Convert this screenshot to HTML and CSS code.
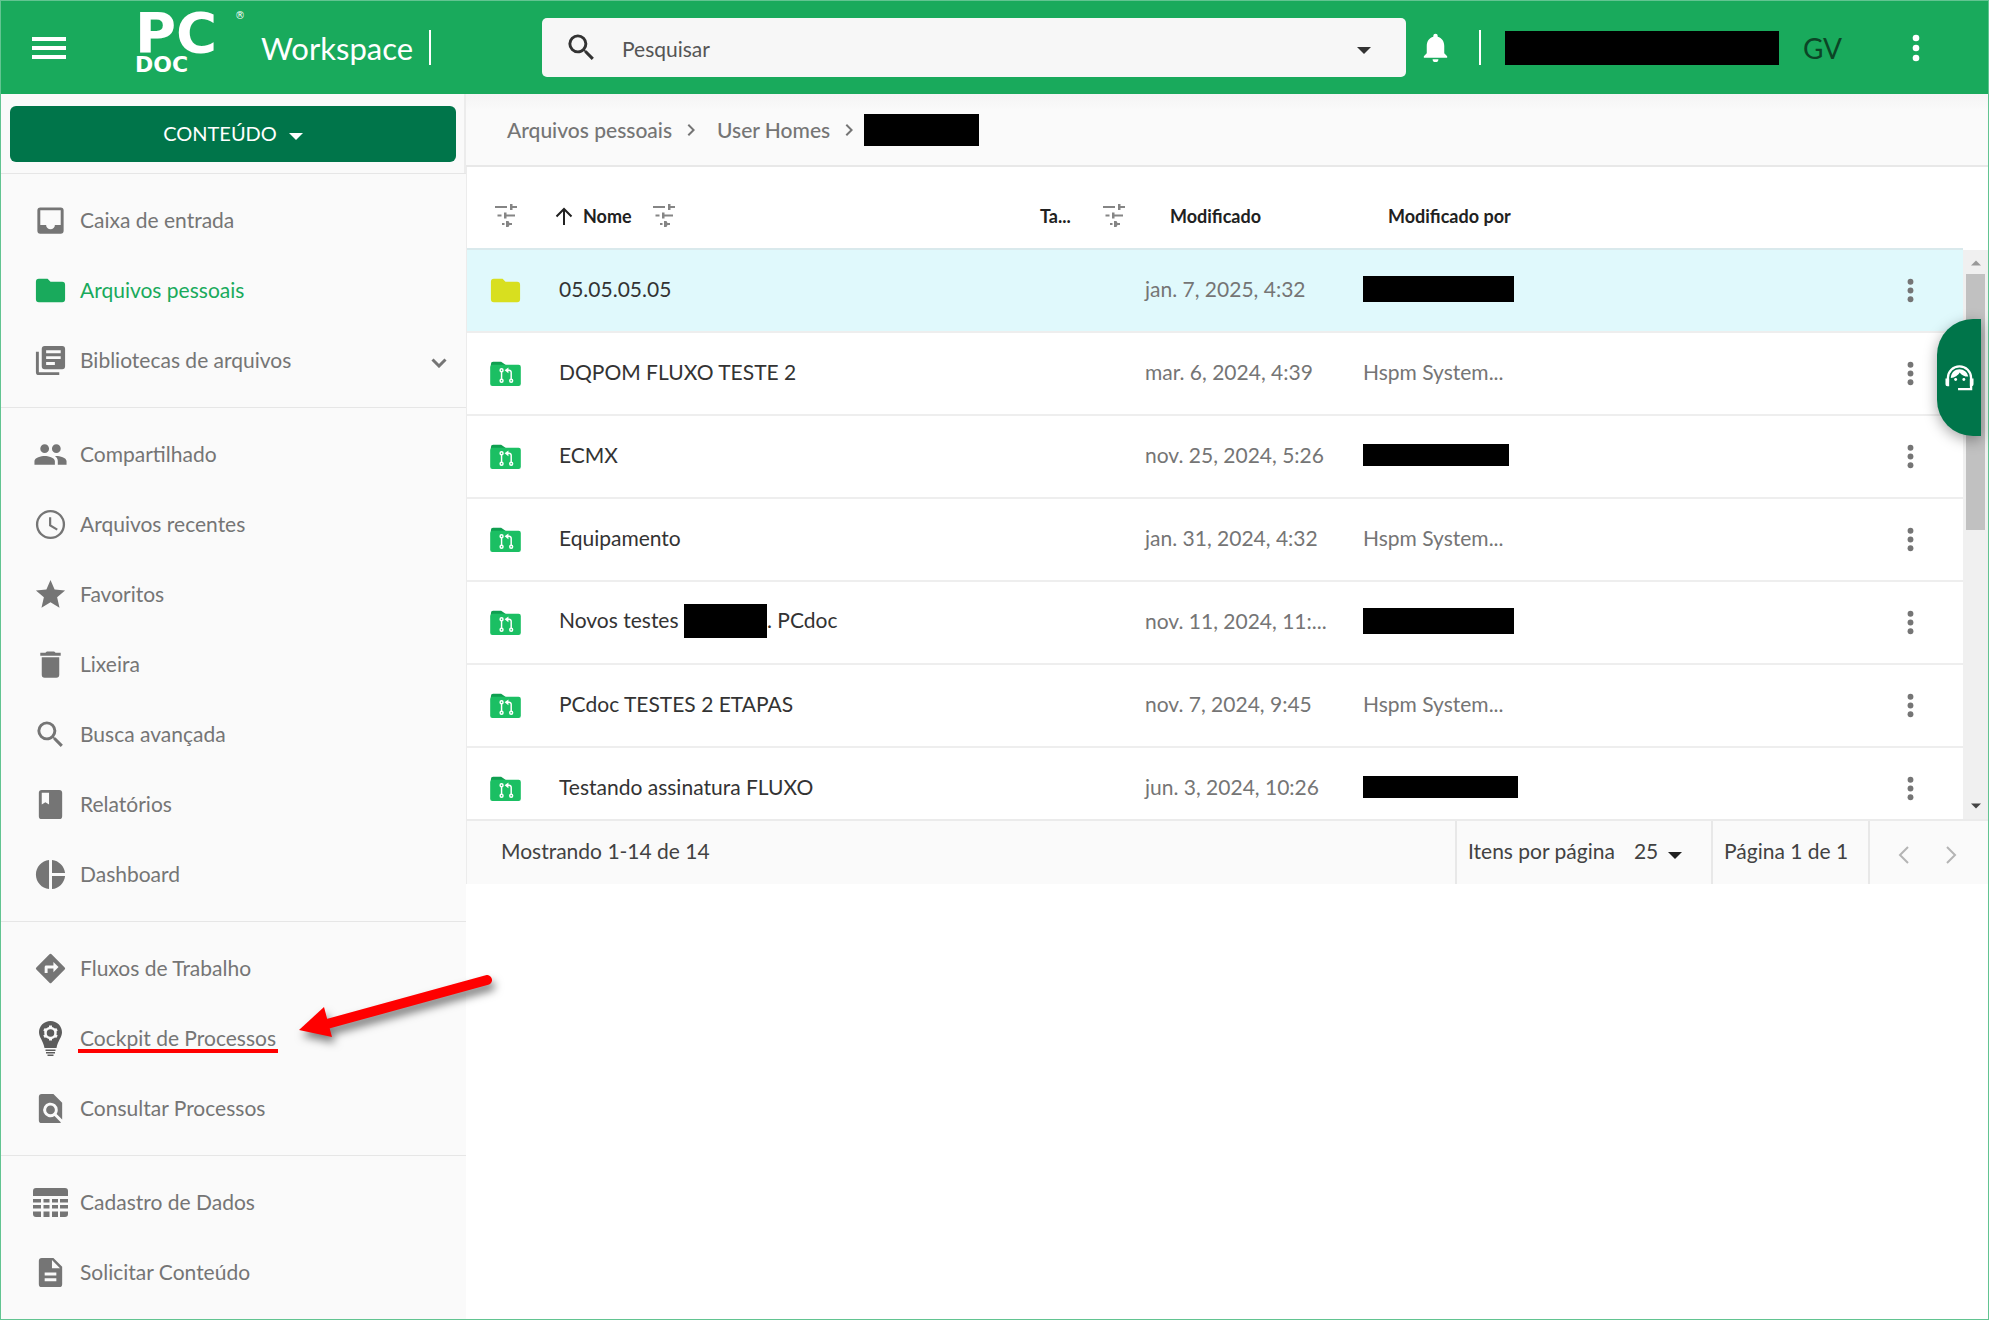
FILE: index.html
```html
<!DOCTYPE html>
<html lang="pt-BR">
<head>
<meta charset="utf-8">
<title>PCDOC Workspace</title>
<link rel="stylesheet" href="styles.css">
</head>
<body>
<svg class="defs" aria-hidden="true">
  <symbol id="caret" viewBox="0 0 14 7"><path d="M0 0h14L7 7z"/></symbol>
  <symbol id="dots" viewBox="0 0 24 24"><circle cx="12" cy="6" r="2"/><circle cx="12" cy="12" r="2"/><circle cx="12" cy="18" r="2"/></symbol>
  <symbol id="search" viewBox="0 0 24 24"><path d="M15.5 14h-.79l-.28-.27A6.47 6.47 0 0 0 16 9.5 6.5 6.5 0 1 0 9.5 16c1.61 0 3.09-.59 4.23-1.57l.27.28v.79l5 4.99L20.49 19zm-6 0a4.5 4.5 0 1 1 0-9 4.5 4.5 0 0 1 0 9z"/></symbol>
  <symbol id="folder" viewBox="0 0 24 24"><path d="M10 4H4a2 2 0 0 0-2 2v12a2 2 0 0 0 2 2h16a2 2 0 0 0 2-2V8a2 2 0 0 0-2-2h-8z"/></symbol>
  <symbol id="flow-folder" viewBox="0 0 24 24"><path fill="#0f9f50" d="M9 4H3.500A1.500 1.500 0 0 0 2 5.500V10h10V6z"/><rect x="1.500" y="6" width="21" height="14.500" rx="1.500" fill="#1bbf63"/><g fill="none" stroke="#fff" stroke-width="1"><path d="M9.300 10.800v5.200M13 9.800h1.500a1.400 1.400 0 0 1 1.400 1.400V16"/><circle cx="9.300" cy="9.800" r="1"/><circle cx="9.300" cy="17" r="1"/><circle cx="15.900" cy="17" r="1"/></g><path fill="#fff" d="M14 7.800v4l-2.600-2z"/></symbol>
  <symbol id="filter" viewBox="0 0 24 24"><path d="M0 2h12v2H0zM15 0h2.500v2H22v2h-4.500v2H15zM2.500 10.500h4v2h-4zM9 8.500h2.500v2H20v2h-8.500v2H9zM7 19h2.500v2H7zM11 17h2.500l1 2H17v2h-2.500l-1 2H11z"/></symbol>
  <symbol id="right" viewBox="0 0 24 24"><path d="M8.590 16.590 13.170 12 8.590 7.410 10 6l6 6-6 6z"/></symbol>
</svg>

<div class="app">
  <header class="topbar">
    <div class="brand">
      <button class="icon-btn" aria-label="Menu"><svg class="menu-icon" viewBox="0 0 34 22"><path d="M0 0h34v4H0zM0 9h34v4H0zM0 18h34v4H0z"/></svg></button>
      <a class="logo" href="#"><span class="logo-pc">PC</span><span class="logo-doc">DOC</span><span class="logo-mark">®</span></a>
      <span class="product">Workspace</span>
      <span class="bar"></span>
    </div>
    <div class="searchbox">
      <svg class="i35"><use href="#search"/></svg>
      <input type="text" aria-label="Pesquisar" placeholder="Pesquisar">
      <button class="icon-btn" aria-label="Opções de pesquisa"><svg class="caret"><use href="#caret"/></svg></button>
    </div>
    <div class="account">
      <button class="icon-btn" aria-label="Notificações"><svg class="i35" viewBox="0 0 24 24"><path d="M12 22a2 2 0 0 0 2-2h-4a2 2 0 0 0 2 2zm6-6v-5c0-3.070-1.640-5.640-4.500-6.320V4a1.500 1.500 0 0 0-3 0v.68C7.630 5.360 6 7.920 6 11v5l-2 2v1h16v-1z"/></svg></button>
      <span class="bar"></span>
      <span class="redact user-name"></span>
      <span class="initials">GV</span>
      <button class="icon-btn more" aria-label="Mais"><svg class="i40"><use href="#dots"/></svg></button>
    </div>
  </header>

  <div class="body">
    <nav class="sidebar">
      <div class="create"><button class="create-btn">CONTEÚDO <svg class="caret"><use href="#caret"/></svg></button></div>
      <div class="group">
        <a class="item" href="#"><svg class="i35" viewBox="0 0 24 24"><path d="M19 3H5a2 2 0 0 0-2 2v14a2 2 0 0 0 2 2h14a2 2 0 0 0 2-2V5a2 2 0 0 0-2-2zm0 12h-4a3 3 0 0 1-6 0H5V5h14z"/></svg><span>Caixa de entrada</span></a>
        <a class="item active" href="#"><svg class="i35"><use href="#folder"/></svg><span>Arquivos pessoais</span></a>
        <a class="item" href="#"><svg class="i35" viewBox="0 0 24 24"><path d="M4 6H2v14a2 2 0 0 0 2 2h14v-2H4zm16-4H8a2 2 0 0 0-2 2v12a2 2 0 0 0 2 2h12a2 2 0 0 0 2-2V4a2 2 0 0 0-2-2zm-1 9H9V9h10zm-4 4H9v-2h6zm4-8H9V5h10z"/></svg><span>Bibliotecas de arquivos</span><svg class="expand" viewBox="0 0 16 10"><path d="M1.500 1.500 8 8l6.500-6.500"/></svg></a>
      </div>
      <div class="group">
        <a class="item" href="#"><svg class="i35" viewBox="0 0 24 24"><path d="M16 11a3 3 0 1 0 0-6 3 3 0 0 0 0 6zm-8 0a3 3 0 1 0 0-6 3 3 0 0 0 0 6zm0 2c-2.330 0-7 1.170-7 3.500V19h14v-2.500C15 14.170 10.330 13 8 13zm8 0-.97.050c1.160.84 1.970 1.970 1.970 3.450V19h6v-2.500c0-2.330-4.670-3.500-7-3.500z"/></svg><span>Compartilhado</span></a>
        <a class="item" href="#"><svg class="i35" viewBox="0 0 24 24"><path d="M12 2a10 10 0 1 0 0 20 10 10 0 0 0 0-20zm0 18.400a8.400 8.400 0 1 1 0-16.800 8.400 8.400 0 0 1 0 16.800zM12.500 7H11v6l5.250 3.150.75-1.230-4.500-2.670z"/></svg><span>Arquivos recentes</span></a>
        <a class="item" href="#"><svg class="i35" viewBox="0 0 24 24"><path d="M12 17.270 18.180 21l-1.640-7.030L22 9.240l-7.190-.61L12 2 9.190 8.630 2 9.240l5.460 4.730L5.820 21z"/></svg><span>Favoritos</span></a>
        <a class="item" href="#"><svg class="i35" viewBox="0 0 24 24"><path d="M6 19a2 2 0 0 0 2 2h8a2 2 0 0 0 2-2V7H6zM19 4h-3.500l-1-1h-5l-1 1H5v2h14z"/></svg><span>Lixeira</span></a>
        <a class="item" href="#"><svg class="i35"><use href="#search"/></svg><span>Busca avançada</span></a>
        <a class="item" href="#"><svg class="i35" viewBox="0 0 24 24"><path fill-rule="evenodd" d="M18 2H6a2 2 0 0 0-2 2v16a2 2 0 0 0 2 2h12a2 2 0 0 0 2-2V4a2 2 0 0 0-2-2zM6 4h5v8l-2.500-1.500L6 12z"/></svg><span>Relatórios</span></a>
        <a class="item" href="#"><svg class="i35" viewBox="0 0 24 24"><path d="M11 2v20c-5.070-.5-9-4.790-9-10s3.930-9.500 9-10zm2.030 0v8.990H22c-.47-4.740-4.240-8.520-8.970-8.990zm0 11.010V22c4.740-.47 8.500-4.250 8.970-8.990z"/></svg><span>Dashboard</span></a>
      </div>
      <div class="group">
        <a class="item" href="#"><svg class="i35" viewBox="0 0 24 24"><path d="m21.710 11.290-9-9a1 1 0 0 0-1.410 0l-9 9a1 1 0 0 0 0 1.410l9 9a1 1 0 0 0 1.410 0l9-9a1 1 0 0 0 0-1.410zM14 14.500V12h-4v3H8v-4c0-.55.45-1 1-1h5V7.500l3.500 3.500z"/></svg><span>Fluxos de Trabalho</span></a>
        <a class="item" href="#"><svg class="i35" viewBox="0 0 35 35"><path fill="#5c5c5c" d="M17.500 0C11 0 6 5 6 11.300c0 5 4 8 5.500 15.700h12C25 19.300 29 16.300 29 11.300 29 5 24 0 17.500 0zM12.500 28.500h10v1.500h-10zM13 31h9v1.500h-9zM14.500 33.500h6V35h-6z"/><circle cx="17.500" cy="12" r="5" fill="none" stroke="#fafafa" stroke-width="2.500"/><path stroke="#fafafa" stroke-width="3" d="M17.500 4.500V7M17.500 17v2.500M11 8.200l2.200 1.300M21.800 14.500l2.200 1.300M11 15.800l2.200-1.300M21.800 9.500 24 8.200"/></svg><span class="marked">Cockpit de Processos</span></a>
        <a class="item" href="#"><svg class="i35" viewBox="0 0 24 24"><path d="M20 19.590V8l-6-6H6a2 2 0 0 0-1.990 2L4 20a2 2 0 0 0 1.990 2H18c.45 0 .85-.15 1.190-.4l-4.430-4.430A5 5 0 1 1 17 13c0 1-.29 1.930-.8 2.700zM9 13a3 3 0 1 0 6 0 3 3 0 0 0-6 0z"/></svg><span>Consultar Processos</span></a>
      </div>
      <div class="group">
        <a class="item" href="#"><svg class="i35" viewBox="0 0 35 35"><path d="M3 3h29a3 3 0 0 1 3 3v5H0V6a3 3 0 0 1 3-3zM0 14h8v3.500H0zM10.500 14h6v3.500h-6zM19 14h6v3.500h-6zM27 14h8v3.500h-8zM0 20h8v3.500H0zM10.500 20h6v3.500h-6zM19 20h6v3.500h-6zM27 20h8v3.500h-8zM0 26.500h8V32H3a3 3 0 0 1-3-3zM10.500 26.500h6V32h-6zM19 26.500h6V32h-6zM27 26.500h8V29a3 3 0 0 1-3 3h-5z"/></svg><span>Cadastro de Dados</span></a>
        <a class="item" href="#"><svg class="i35" viewBox="0 0 24 24"><path d="M14 2H6a2 2 0 0 0-1.990 2L4 20a2 2 0 0 0 1.990 2H18a2 2 0 0 0 2-2V8zm2 16H8v-2h8zm0-4H8v-2h8zm-3-5V3.500L18.500 9z"/></svg><span>Solicitar Conteúdo</span></a>
      </div>
    </nav>

    <main class="content">
      <nav class="crumbs" aria-label="Caminho">
        <a href="#">Arquivos pessoais</a><svg class="sep"><use href="#right"/></svg>
        <a href="#">User Homes</a><svg class="sep"><use href="#right"/></svg>
        <span class="redact crumb-current"></span>
      </nav>
      <div class="list">
        <table class="files">
          <colgroup><col class="c-icon"><col class="c-name"><col class="c-size"><col class="c-date"><col class="c-by"><col class="c-act"></colgroup>
          <thead>
            <tr>
              <th class="filter-cell"><svg class="filter"><use href="#filter"/></svg></th>
              <th><span class="head-name"><svg class="sort" viewBox="0 0 18 18"><path d="M9 18V2M1.500 9.500 9 2l7.500 7.500"/></svg>Nome<svg class="filter"><use href="#filter"/></svg></span></th>
              <th><span class="head-size">Ta...<svg class="filter"><use href="#filter"/></svg></span></th>
              <th class="indent">Modificado</th>
              <th class="indent">Modificado por</th>
              <th></th>
            </tr>
          </thead>
          <tbody>
            <tr class="selected"><td class="type"><svg class="i35 yellow"><use href="#folder"/></svg></td><td class="name">05.05.05.05</td><td></td><td>jan. 7, 2025, 4:32</td><td><span class="redact person"></span></td><td class="act"><button class="icon-btn" aria-label="Ações"><svg class="i35"><use href="#dots"/></svg></button></td></tr>
            <tr><td class="type"><svg class="i35"><use href="#flow-folder"/></svg></td><td class="name">DQPOM FLUXO TESTE 2</td><td></td><td>mar. 6, 2024, 4:39</td><td>Hspm System...</td><td class="act"><button class="icon-btn" aria-label="Ações"><svg class="i35"><use href="#dots"/></svg></button></td></tr>
            <tr><td class="type"><svg class="i35"><use href="#flow-folder"/></svg></td><td class="name">ECMX</td><td></td><td>nov. 25, 2024, 5:26</td><td><span class="redact person slim"></span></td><td class="act"><button class="icon-btn" aria-label="Ações"><svg class="i35"><use href="#dots"/></svg></button></td></tr>
            <tr><td class="type"><svg class="i35"><use href="#flow-folder"/></svg></td><td class="name">Equipamento</td><td></td><td>jan. 31, 2024, 4:32</td><td>Hspm System...</td><td class="act"><button class="icon-btn" aria-label="Ações"><svg class="i35"><use href="#dots"/></svg></button></td></tr>
            <tr><td class="type"><svg class="i35"><use href="#flow-folder"/></svg></td><td class="name">Novos testes <span class="redact word"></span>. PCdoc</td><td></td><td>nov. 11, 2024, 11:...</td><td><span class="redact person"></span></td><td class="act"><button class="icon-btn" aria-label="Ações"><svg class="i35"><use href="#dots"/></svg></button></td></tr>
            <tr><td class="type"><svg class="i35"><use href="#flow-folder"/></svg></td><td class="name">PCdoc TESTES 2 ETAPAS</td><td></td><td>nov. 7, 2024, 9:45</td><td>Hspm System...</td><td class="act"><button class="icon-btn" aria-label="Ações"><svg class="i35"><use href="#dots"/></svg></button></td></tr>
            <tr><td class="type"><svg class="i35"><use href="#flow-folder"/></svg></td><td class="name">Testando assinatura FLUXO</td><td></td><td>jun. 3, 2024, 10:26</td><td><span class="redact person slim wide"></span></td><td class="act"><button class="icon-btn" aria-label="Ações"><svg class="i35"><use href="#dots"/></svg></button></td></tr>
          </tbody>
        </table>
        <div class="scrollbar" aria-hidden="true">
          <svg class="scroll-up" viewBox="0 0 14 7"><path d="M0 7h14L7 0z"/></svg>
          <div class="thumb"></div>
          <svg class="scroll-down" viewBox="0 0 14 7"><path d="M0 0h14L7 7z"/></svg>
        </div>
      </div>
      <footer class="pager">
        <span class="range">Mostrando 1-14 de 14</span>
        <div class="per-page"><label for="size">Itens por página</label><select id="size"><option>25</option></select><svg class="caret"><use href="#caret"/></svg></div>
        <span class="page">Página 1 de 1</span>
        <div class="turn">
          <button class="icon-btn" aria-label="Página anterior" disabled><svg viewBox="0 0 12 18"><path d="m10 1-8 8 8 8"/></svg></button>
          <button class="icon-btn" aria-label="Próxima página" disabled><svg viewBox="0 0 12 18"><path d="m2 1 8 8-8 8"/></svg></button>
        </div>
      </footer>
    </main>
  </div>

  <button class="support" aria-label="Suporte"><svg viewBox="0 0 30 28"><path fill="none" stroke="#fff" stroke-width="2.400" d="M3 18v-4a12 12 0 0 1 24 0v11.500H13.500"/><path fill="#fff" d="M.5 14.500h3.800v8H2.500a2 2 0 0 1-2-2zM25.700 14.500h3.800v6a2 2 0 0 1-2 2h-1.800zM6 14c.3-5.500 4.300-9 9-9 4.500 0 8.200 3 9 7.500-4 0-7-1.500-8.800-4.300C13.800 11 10 13.500 6 14z"/><circle cx="11" cy="15.500" r="1.500" fill="#fff"/><circle cx="19.500" cy="15.500" r="1.500" fill="#fff"/></svg></button>
  <svg class="arrow" viewBox="0 0 200 80" aria-hidden="true"><path d="M188 12 28 56" stroke="#f00" stroke-width="10" stroke-linecap="round"/><path fill="#f00" d="M0 62 25 39l8 30z"/></svg>
</div>
</body>
</html>
```
FILE: styles.css
```css
* { box-sizing: border-box; }
body { margin: 0; font-family: Lato, "Noto Sans", sans-serif; font-size: 21px; line-height: 28px; color: #757575; background: #fff; }
svg { fill: currentColor; display: block; flex: none; }
a { color: inherit; text-decoration: none; }
.defs { position: absolute; width: 0; height: 0; }
.icon-btn { display: flex; align-items: center; justify-content: center; padding: 0; border: 0; background: none; color: inherit; }
.i35 { width: 35px; height: 35px; }
.i40 { width: 40px; height: 40px; }
.caret { width: 14px; height: 7px; }
.redact { display: block; background: #000; }

.app { position: relative; display: flex; flex-direction: column; min-height: 100vh; border: 1px solid #62c491; }

.topbar { display: flex; align-items: center; height: 93px; background: #19aa5c; color: #fff; }
.brand { display: flex; align-items: center; flex: none; width: 541px; padding-left: 31px; }
.menu-icon { width: 34px; height: 22px; }
.bar { width: 2px; height: 35px; background: #fff; }
.logo { position: relative; display: flex; flex-direction: column; width: 110px; margin: 0 16px 12px 69px; font-family: "DejaVu Sans", sans-serif; font-weight: bold; }
.logo-pc { font-size: 56px; line-height: 46px; }
.logo-doc { font-size: 22px; line-height: 18px; }
.logo-mark { position: absolute; top: 0; right: 0; font-size: 10px; line-height: 12px; font-weight: normal; }
.product { width: 152px; margin-right: 16px; font-size: 31px; line-height: 36px; }
.searchbox { display: flex; align-items: center; flex: 1; height: 59px; padding: 0 35px 0 22px; border-radius: 5px; background: #f7f7f7; color: #333; }
.searchbox input { flex: 1; min-width: 0; margin: 3px 0 0 23px; padding: 0; border: 0; outline: 0; background: none; font: inherit; color: #555; }
.searchbox input::placeholder { color: #555; opacity: 1; }
.searchbox .caret { margin-top: 6px; }
.account { display: flex; align-items: center; flex: none; width: 582px; padding-left: 12px; }
.account .bar { margin-left: 26px; }
.user-name { width: 274px; height: 34px; margin-left: 24px; }
.initials { width: 70px; margin-left: 24px; font-size: 28px; color: #0b4526; }
.more { margin-left: 23px; }

.body { display: flex; flex: 1; }
.sidebar { flex: none; width: 465px; background: #fafafa; }
.create { padding: 12px 8px 11px 9px; border-right: 2px solid #ececec; }
.create-btn { display: flex; align-items: center; justify-content: center; gap: 12px; width: 100%; height: 56px; padding: 0 0 2px; border: 0; border-radius: 6px; background: #00754a; color: #fff; font: inherit; font-size: 20px; }
.create-btn .caret { margin-top: 6px; }
.group { padding: 11px 0 12px; border-top: 1px solid #e6e6e6; }
.item { display: flex; align-items: center; gap: 12px; height: 70px; padding: 0 19px 0 32px; }
.item.active { color: #19aa5c; }
.expand { width: 16px; height: 10px; margin: 6px 0 0 auto; fill: none; stroke: currentColor; stroke-width: 3px; }
.marked { position: relative; }
.marked::after { content: ""; position: absolute; left: -2px; right: -2px; bottom: -1px; height: 4px; background: #f00; }

.content { display: flex; flex-direction: column; flex: 1; min-width: 0; }
.crumbs { display: flex; align-items: center; height: 73px; padding-left: 41px; border-bottom: 2px solid #e8e8e8; background: linear-gradient(#f4f4f4, #fafafa 16px); font-weight: 500; }
.sep { width: 24px; height: 24px; margin: 0 14px 0 7px; }
.sep + .redact { margin-left: -11px; }
.crumb-current { width: 115px; height: 32px; }

.list { display: flex; height: 652px; overflow: hidden; border-left: 1px solid #ececec; }
.files { flex: 1; min-width: 0; width: 100%; height: max-content; table-layout: fixed; border-collapse: separate; border-spacing: 0; }
.c-icon { width: 84px; }
.c-size { width: 105px; }
.c-name { width: 489px; }
.c-date { width: 218px; }
.c-act { width: 104px; }
.files th { height: 83px; padding: 16px 0 0; border-bottom: 2px solid #d9e9ec; font-size: 18px; font-weight: bold; text-align: left; color: #212121; }
.files td { height: 83px; padding: 0 0 3px; border-bottom: 2px solid #eee; white-space: nowrap; }
.files th.filter-cell { padding-left: 28px; }
.files th.indent { padding-left: 25px; }
.files .filter { width: 24px; height: 24px; color: #858585; }
.head-name, .head-size { display: flex; align-items: center; }
.head-name .filter { margin-left: 21px; }
.head-size .filter { margin-left: 32px; }
.sort { width: 18px; height: 18px; margin: 0 10px 0 4px; fill: none; stroke: currentColor; stroke-width: 2px; }
.files td.type { padding: 0 0 0 21px; }
.files td.name { padding-left: 8px; color: #333; }
.files td.act { padding: 0 0 0 34px; }
.selected { background: #e0f9fc; }
.yellow { color: #d8df1f; }
.person { width: 151px; height: 26px; }
.slim { width: 146px; height: 22px; }
.wide { width: 155px; }
.word { display: inline-block; width: 83px; height: 34px; vertical-align: -10px; }

.scrollbar { display: flex; flex-direction: column; align-items: center; flex: none; width: 25px; margin-top: 83px; padding-top: 10px; background: #f0f0f0; }
.scroll-up, .scroll-down { width: 10px; height: 6px; }
.scroll-up { color: #999; }
.scroll-down { margin: auto 0 10px; color: #444; }
.thumb { width: 19px; height: 256px; margin-top: 8px; background: #c1c1c1; }

.pager { display: flex; height: 65px; line-height: 60px; background: #fafafa; border-top: 2px solid #ebebeb; border-left: 1px solid #ececec; color: #424242; }
.range { flex: 1; padding-left: 34px; }
.per-page { display: flex; align-items: center; width: 256px; padding: 0 0 3px 11px; border-left: 2px solid #e8e8e8; }
.per-page select { appearance: none; width: 28px; margin-left: 19px; padding: 0; border: 0; background: none; font: inherit; color: inherit; }
.per-page .caret { margin: 9px 0 0 6px; color: #212121; }
.page { width: 157px; padding-left: 11px; border-left: 2px solid #e8e8e8; }
.turn { display: flex; align-items: center; gap: 35px; width: 120px; padding: 4px 0 0 28px; border-left: 2px solid #e8e8e8; color: #b4b4b4; }
.turn svg { width: 12px; height: 18px; fill: none; stroke: currentColor; stroke-width: 2px; }

.support { position: absolute; top: 318px; right: 7px; display: flex; align-items: center; justify-content: center; width: 44px; height: 117px; padding: 0; border: 0; border-radius: 36px 0 0 36px; background: #00754a; box-shadow: 0 4px 14px rgba(0, 0, 0, .35); }
.support svg { width: 29px; height: 28px; }
.arrow { position: absolute; left: 298px; top: 967px; width: 200px; height: 80px; filter: drop-shadow(3px 6px 4px rgba(0, 0, 0, .5)); }
```
